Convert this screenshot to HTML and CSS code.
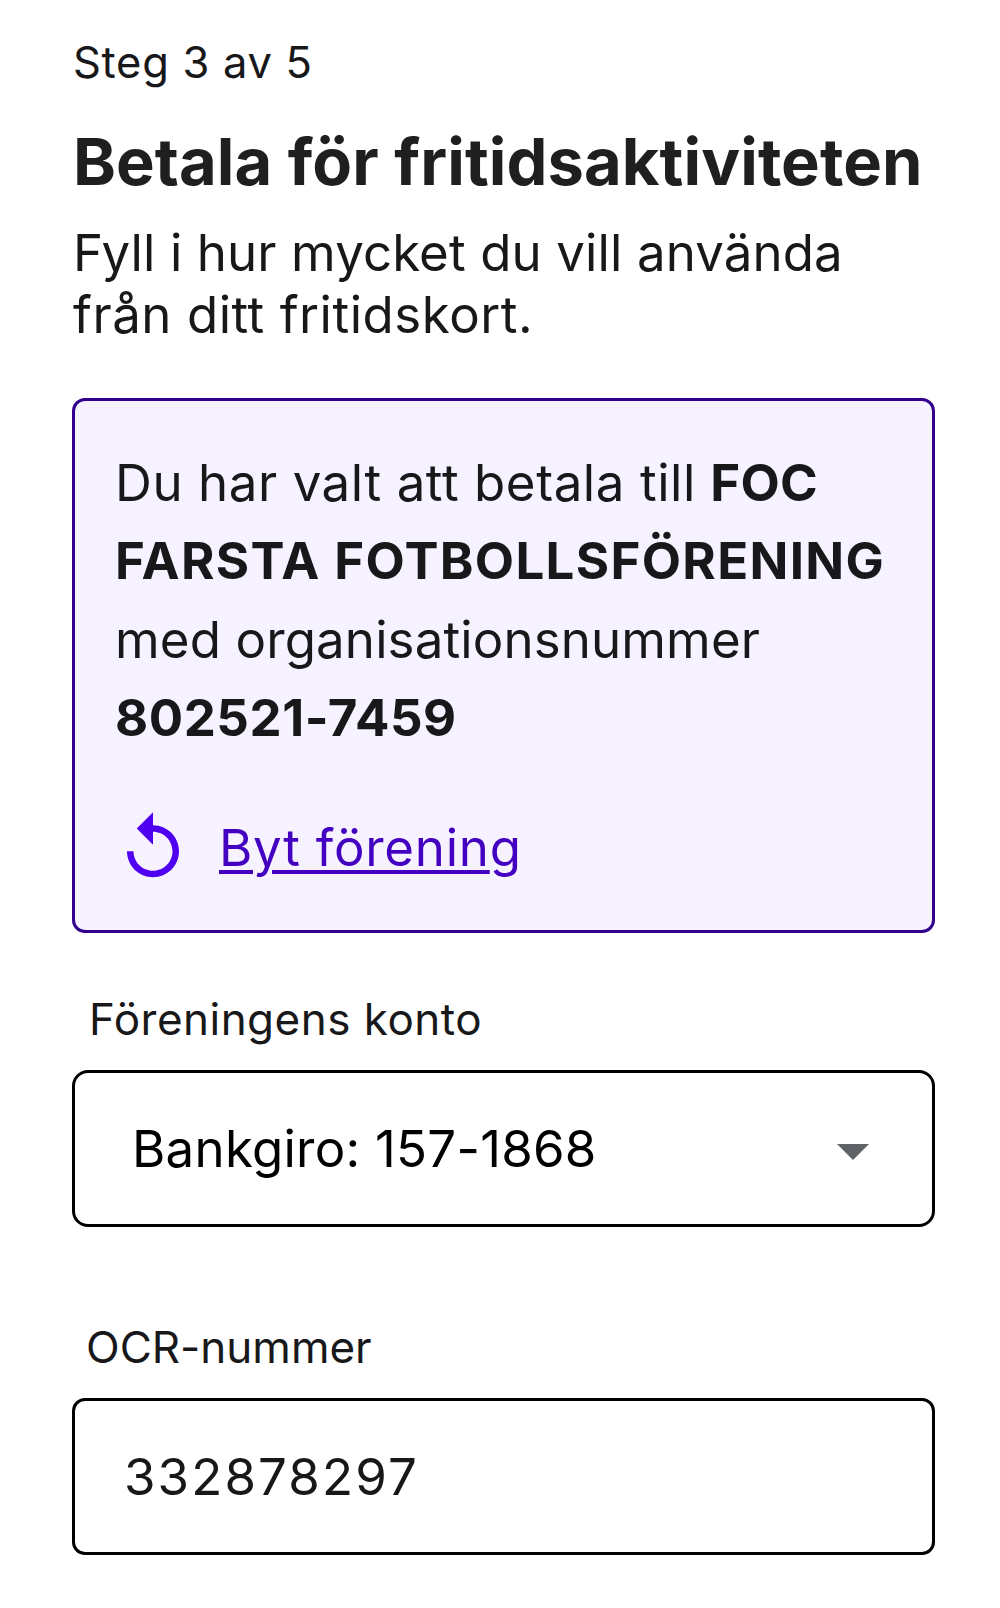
FILE: index.html
```html
<!DOCTYPE html>
<html lang="sv">
<head>
    <meta charset="UTF-8">
    <meta name="viewport" content="width=device-width, initial-scale=1.0">
    <title>Betala för fritidsaktiviteten</title>
    <link rel="stylesheet" href="styles.css">
</head>
<body>
    <main class="container">
        <div class="step">Steg 3 av 5</div>
        <h1>Betala för fritidsaktiviteten</h1>
        <p class="intro"><span class="intro-first">Fyll i hur mycket du vill använda</span><br><span class="intro-last">från ditt fritidskort.</span></p>

        <section class="card">
            <p class="card-text">
                <span class="chosen">Du har valt att betala till</span> <strong class="org">FOC<br><span class="org-name">FARSTA FOTBOLLSFÖRENING</span></strong><br>
                <span class="with">med organisationsnummer</span><br>
                <strong class="org-number">802521-7459</strong>
            </p>
            <div class="change">
                <svg class="icon" viewBox="0 0 24 24" aria-hidden="true">
                    <path d="M12 5V1L7 6l5 5V7c3.31 0 6 2.69 6 6s-2.69 6-6 6-6-2.69-6-6H4c0 4.42 3.58 8 8 8s8-3.58 8-8-3.58-8-8-8z"/>
                </svg>
                <a href="#">Byt förenin<span class="last">g</span></a>
            </div>
        </section>

        <form>
            <label class="label-account" for="konto">Föreningens konto</label>
            <div class="select-box">
                <select id="konto">
                    <option>Bankgiro: 157-1868</option>
                </select>
                <svg class="arrow" viewBox="0 0 32 16" aria-hidden="true"><path d="M0 0h32L16 16z"/></svg>
            </div>

            <label class="label-ocr" for="ocr">OCR-nummer</label>
            <input type="text" id="ocr" value="332878297">
        </form>
    </main>
</body>
</html>
```
FILE: styles.css
```css
* {
    box-sizing: border-box;
}
body {
    margin: 0;
    background-color: #fff;
    color: #18181a;
    font-family: Inter, "Liberation Sans", sans-serif;
    font-size: 51px;
}
.container {
    width: 935px;
    padding: 36px 0 0 72px;
}
.step {
    padding-left: 1px;
    font-size: 43.5px;
    line-height: 52px;
    letter-spacing: 0.7px;
}
h1 {
    margin: 35px 0 0;
    padding-left: 1px;
    font-size: 65px;
    line-height: 78px;
    font-weight: 700;
    letter-spacing: 0.07px;
    color: #1f1f1f;
    white-space: nowrap;
}
.intro {
    margin: 21px 0 0;
    padding-left: 1px;
    line-height: 62px;
    white-space: nowrap;
}
.intro-first {
    letter-spacing: 0.11px;
}
.intro-last {
    letter-spacing: 0.54px;
}
.card {
    margin-top: 52px;
    height: 535px;
    padding: 43px 0 0 39px;
    border: 3px solid #32008c;
    border-radius: 13px;
    background-color: #f6f2ff;
}
.card-text {
    margin: 0;
    padding-left: 1px;
    line-height: 78.4px;
    white-space: nowrap;
}
.chosen {
    letter-spacing: 0.57px;
}
.org {
    letter-spacing: 0.3px;
}
.org-name {
    letter-spacing: 1.32px;
}
.with {
    letter-spacing: 0.13px;
}
.org-number {
    letter-spacing: 0.55px;
}
.change {
    display: flex;
    align-items: center;
    gap: 27px;
    margin-top: 51px;
}
.icon {
    width: 78px;
    height: 78px;
    fill: #5000f0;
}
a {
    color: #4400c0;
    letter-spacing: 0.75px;
    text-decoration-thickness: 4px;
    text-underline-offset: 4px;
}
/* no stub of underline after the descender */
.last {
    display: inline-block;
}
label {
    display: block;
    font-size: 44px;
    line-height: 54px;
}
.label-account {
    margin: 59px 0 24px;
    padding-left: 17px;
    letter-spacing: 0.48px;
}
.label-ocr {
    margin: 93px 0 24px;
    padding-left: 14px;
}
.select-box {
    display: grid;
    align-items: center;
}
select, input {
    width: 100%;
    height: 157px;
    border: 3px solid #000;
    background-color: #fff;
    font-family: inherit;
    font-size: 51px;
}
select {
    grid-area: 1 / 1;
    appearance: none;
    padding: 0 100px 0 57px;
    border-radius: 16px;
    color: #000;
    letter-spacing: 0.25px;
}
input {
    display: block;
    padding: 0 49px;
    border-radius: 13px;
    color: #18181a;
    letter-spacing: 2.1px;
}
.arrow {
    grid-area: 1 / 1;
    justify-self: end;
    width: 32px;
    height: 16px;
    margin: 7px 66px 0 0;
    fill: #5f6368;
    pointer-events: none;
}
```
